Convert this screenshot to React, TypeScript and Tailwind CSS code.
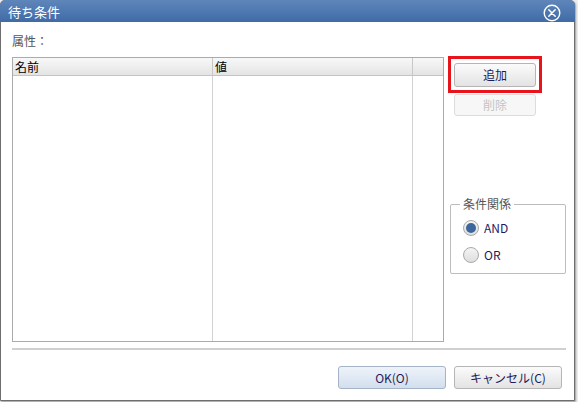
import React, { useState } from 'react';

const font = { fontFamily: '"Noto Sans CJK JP", "Noto Sans", sans-serif' };

export default function App() {
  const [rel, setRel] = useState('AND');

  return (
    <div className="w-[578px] h-[402px] bg-[#eeeeee] overflow-hidden" style={font}>
      <div className="w-[575px] h-[401px] bg-white border border-[#6e6e6e] rounded-t-[5px] shadow-[1px_1px_2px_rgba(0,0,0,0.35)] flex flex-col">
        {/* title bar */}
        <div className="h-[22px] -mx-px -mt-px rounded-t-[5px] bg-gradient-to-b from-[#5f86bb] to-[#3f6ba6] flex items-center justify-between pl-[8px] pr-[14px]">
          <span className="text-white text-[13px] leading-none">待ち条件</span>
          <svg width="18" height="18" viewBox="0 0 18 18" className="mt-[3px]">
            <circle cx="9" cy="9" r="7.8" fill="none" stroke="white" strokeWidth="1.4" />
            <path d="M5.8 5.8 L12.2 12.2 M12.2 5.8 L5.8 12.2" stroke="white" strokeWidth="1.5" strokeLinecap="round" />
          </svg>
        </div>

        {/* body */}
        <div className="flex pl-[11px] pr-[8px] pt-[10px]">
          <div className="flex flex-col w-[432px]">
            <div className="text-[12px] leading-[16px] text-[#555] mt-[1px]">属性：</div>
            <div className="mt-[8px] h-[285px] border border-[#ababab] flex flex-col">
              <div className="flex h-[18px] bg-gradient-to-b from-[#f8f8f8] to-[#e4e4e4] border-b border-[#c4c4c4] text-[12px] leading-[17px] text-black">
                <div className="w-[200px] pl-[2px] border-r border-[#c8c8c8]">名前</div>
                <div className="w-[200px] pl-[2px] border-r border-[#c8c8c8]">値</div>
                <div className="flex-1" />
              </div>
              <div className="flex flex-1">
                <div className="w-[200px] border-r border-[#d2d2d2]" />
                <div className="w-[200px] border-r border-[#d2d2d2]" />
                <div className="flex-1" />
              </div>
            </div>
          </div>

          <div className="ml-[4px] mt-[24px] flex flex-col">
            <div className="flex w-[94px] border-[3px] border-[#e8141c] pt-[4px] pb-[3px] px-[3px]">
              <button className="w-[82px] h-[24px] rounded-[3px] border border-[#b5b5b5] bg-gradient-to-b from-[#fbfbfb] to-[#e3e3e3] text-[12px] text-[#1c1c5c]">
                追加
              </button>
            </div>
            <button className="ml-[6px] mt-[1px] w-[82px] h-[22px] rounded-[3px] border border-[#dcdcdc] bg-[#f7f7f7] text-[12px] text-[#c4c4c4]">
              削除
            </button>

            <fieldset className="mt-[81px] ml-[2px] w-[116px] h-[77px] border border-[#bdbdbd] rounded-[2px] pl-[12px]">
              <legend className="text-[12px] leading-[14px] text-[#555] px-[3px] -ml-[3px]">条件関係</legend>
              {['AND', 'OR'].map((v, i) => (
                <label key={v} className={`flex items-center gap-[5px] cursor-pointer ${i === 0 ? 'mt-[9px]' : 'mt-[11px]'}`} onClick={() => setRel(v)}>
                  <span className="w-[16px] h-[16px] rounded-full border border-[#a9a9a9] bg-gradient-to-b from-[#f4f4f4] to-[#dedede] flex items-center justify-center">
                    {rel === v && <span className="w-[10px] h-[10px] rounded-full bg-[#3d679c]" />}
                  </span>
                  <span className="text-[12px] leading-[16px] text-[#1c1c5c]">{v}</span>
                </label>
              ))}
            </fieldset>
          </div>
        </div>

        {/* separator */}
        <div className="ml-[11px] mr-[8px] mt-[6px] h-[2px] bg-[#d0d0d0]" />

        {/* footer */}
        <div className="flex justify-end gap-[8px] pr-[12px] mt-[16px]">
          <button className="w-[108px] h-[23px] rounded-[3px] border border-[#a4b3c6] bg-gradient-to-b from-[#eef3f9] to-[#d3dfee] text-[12px] text-[#1c1c5c]">
            OK(O)
          </button>
          <button className="w-[108px] h-[23px] rounded-[3px] border border-[#b5b5b5] bg-gradient-to-b from-[#fbfbfb] to-[#e3e3e3] text-[12px] text-[#1c1c5c]">
            キャンセル(C)
          </button>
        </div>
      </div>
    </div>
  );
}
